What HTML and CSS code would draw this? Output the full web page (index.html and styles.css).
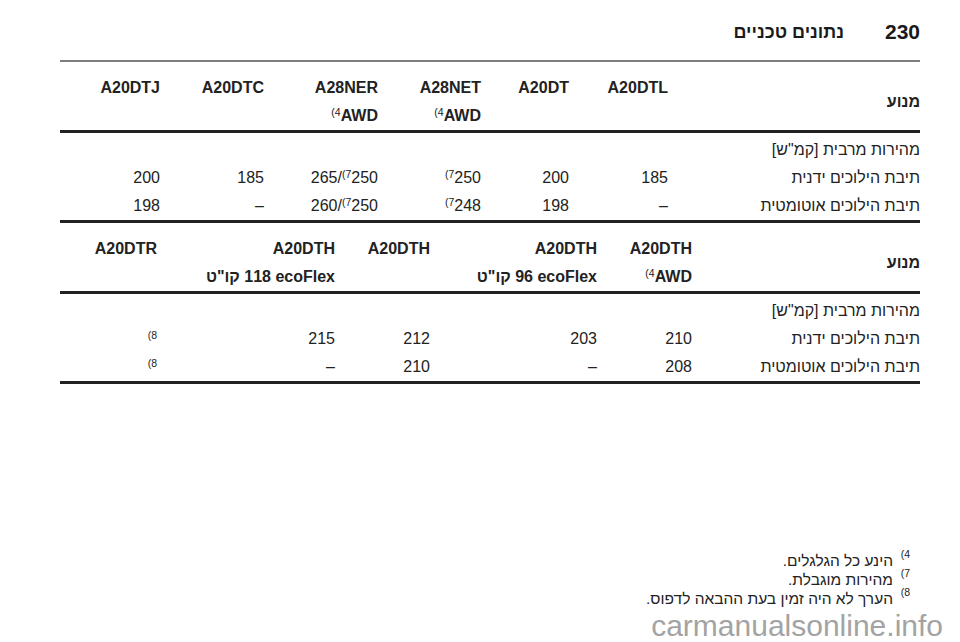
FILE: index.html
```html
<!DOCTYPE html>
<html lang="he" dir="rtl">
<head>
<meta charset="utf-8">
<title>230 נתונים טכניים</title>
<link rel="stylesheet" href="styles.css">
</head>
<body>
<div class="page">
  <header class="title">
    <span class="num">230</span>
    <span class="name">נתונים טכניים</span>
  </header>

  <table class="spec t1">
    <colgroup>
      <col class="c-label1"><col class="w99"><col class="w88"><col class="w103"><col class="w114"><col class="w104"><col class="w100">
    </colgroup>
    <thead>
      <tr>
        <th rowspan="2" class="lbl">מנוע</th>
        <th>A20DTL</th><th>A20DT</th><th>A28NET</th><th>A28NER</th><th>A20DTC</th><th>A20DTJ</th>
      </tr>
      <tr>
        <th></th><th></th>
        <th><span class="ltr"><span class="sup">(4</span>AWD</span></th>
        <th><span class="ltr"><span class="sup">(4</span>AWD</span></th>
        <th></th><th></th>
      </tr>
    </thead>
    <tbody>
      <tr><td colspan="7">מהירות מרבית [קמ"ש]</td></tr>
      <tr>
        <td>תיבת הילוכים ידנית</td>
        <td>185</td><td>200</td>
        <td><span class="ltr"><span class="sup">(7</span>250</span></td>
        <td><span class="ltr">265/<span class="sup">(7</span>250</span></td>
        <td>185</td><td>200</td>
      </tr>
      <tr>
        <td>תיבת הילוכים אוטומטית</td>
        <td>–</td><td>198</td>
        <td><span class="ltr"><span class="sup">(7</span>248</span></td>
        <td><span class="ltr">260/<span class="sup">(7</span>250</span></td>
        <td>–</td><td>198</td>
      </tr>
    </tbody>
  </table>

  <table class="spec t2">
    <colgroup>
      <col class="c-label2"><col class="w95"><col class="w167"><col class="w95"><col class="w178"><col class="w97">
    </colgroup>
    <thead>
      <tr>
        <th rowspan="2" class="lbl">מנוע</th>
        <th>A20DTH</th><th>A20DTH</th><th>A20DTH</th><th>A20DTH</th><th>A20DTR</th>
      </tr>
      <tr>
        <th><span class="ltr"><span class="sup">(4</span>AWD</span></th>
        <th><span class="ltr"><span class="he">קו"ט</span> 96 ecoFlex</span></th>
        <th></th>
        <th><span class="ltr"><span class="he">קו"ט</span> 118 ecoFlex</span></th>
        <th></th>
      </tr>
    </thead>
    <tbody>
      <tr><td colspan="6">מהירות מרבית [קמ"ש]</td></tr>
      <tr>
        <td>תיבת הילוכים ידנית</td>
        <td>210</td><td>203</td><td>212</td><td>215</td>
        <td><span class="ltr"><span class="sup">(8</span></span></td>
      </tr>
      <tr>
        <td>תיבת הילוכים אוטומטית</td>
        <td>208</td><td>–</td><td>210</td><td>–</td>
        <td><span class="ltr"><span class="sup">(8</span></span></td>
      </tr>
    </tbody>
  </table>

  <ol class="notes">
    <li><span class="mark"><span class="ltr">(4</span></span><span class="txt">הינע כל הגלגלים.</span></li>
    <li><span class="mark"><span class="ltr">(7</span></span><span class="txt">מהירות מוגבלת.</span></li>
    <li><span class="mark"><span class="ltr">(8</span></span><span class="txt">הערך לא היה זמין בעת ההבאה לדפוס.</span></li>
  </ol>

  <div class="watermark" dir="ltr">carmanualsonline.info</div>
</div>
</body>
</html>
```

FILE: styles.css
```css
html, body {
  margin: 0;
  padding: 0;
  background: #ffffff;
}

body {
  font-family: "Liberation Sans", "DejaVu Sans", Arial, sans-serif;
  color: #222222;
  width: 960px;
  height: 642px;
  overflow: hidden;
}

.page {
  position: relative;
  width: 960px;
  height: 642px;
  direction: rtl;
}

.title {
  display: flex;
  align-items: center;
  gap: 41px;
  margin: 0 40px 0 60px;
  padding: 18px 0 14px 0;
  border-bottom: 2px solid #7d7d7d;
  font-weight: bold;
  font-size: 21px;
  line-height: 28px;
  color: #1a1a1a;
}

.title .name {
  font-size: 18px;
}

.spec {
  width: 860px;
  margin-left: 60px;
  margin-right: 40px;
  border-collapse: collapse;
  table-layout: fixed;
  font-size: 16px;
  line-height: 28px;
}

.t1 { margin-top: 12px; }
.t2 { margin-top: 12px; }

.spec th, .spec td {
  padding: 0;
  text-align: right;
  white-space: nowrap;
  vertical-align: middle;
}

.spec th {
  font-weight: bold;
}

.spec thead {
  border-bottom: 3px solid #222222;
}

.spec tbody {
  border-bottom: 3px solid #222222;
}

.spec tbody tr:first-child td {
  padding-top: 3px;
}

.c-label1 { width: 252px; }
.c-label2 { width: 228px; }
.w88 { width: 88px; }
.w95 { width: 95px; }
.w97 { width: 97px; }
.w99 { width: 99px; }
.w100 { width: 100px; }
.w103 { width: 103px; }
.w104 { width: 104px; }
.w114 { width: 114px; }
.w167 { width: 167px; }
.w178 { width: 178px; }

.ltr {
  direction: ltr;
  unicode-bidi: isolate;
  display: inline-block;
}

.he {
  direction: rtl;
  unicode-bidi: isolate;
}

.sup {
  font-size: 10.5px;
  vertical-align: 5px;
  line-height: 0;
  font-weight: normal;
}

.notes {
  list-style: none;
  margin: 167px 40px 0 0;
  padding: 0;
  font-size: 15.5px;
  line-height: 19px;
}

.notes li {
  display: flex;
}

.notes .mark {
  width: 17px;
  margin-right: 10px;
  font-size: 10.5px;
  line-height: 12px;
  text-align: right;
  position: relative;
  top: -3px;
}

.watermark {
  position: absolute;
  right: 17px;
  bottom: 5px;
  font-size: 30px;
  line-height: 22px;
  color: #a3a3a3;
}
```
